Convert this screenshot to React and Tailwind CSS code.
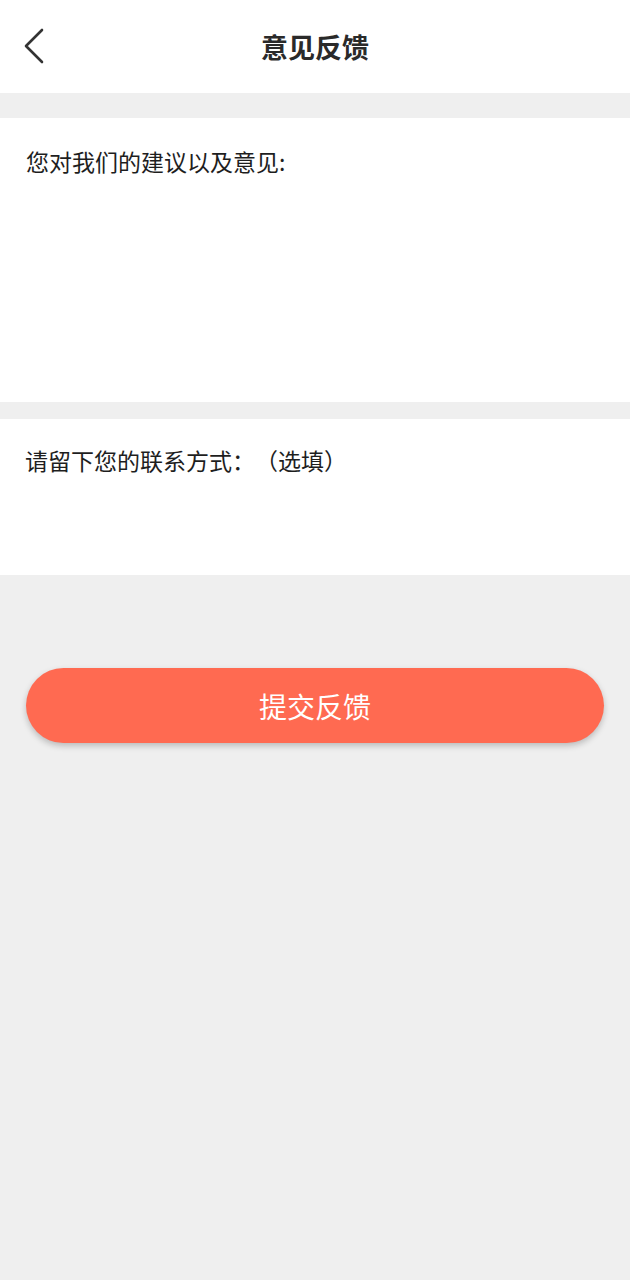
import React from "react";

const font = { fontFamily: '"Noto Sans CJK SC", "Noto Sans", sans-serif' };

export default function App() {
  return (
    <div style={font} className="min-h-[1280px] w-[630px] bg-[#efefef] text-[#1e1e1e] [text-spacing-trim:space-all]">
      <header className="relative flex h-[93px] items-center justify-center bg-white">
        <button className="absolute left-[18px] top-[26px] flex h-[40px] w-[32px] items-center justify-center">
          <svg width="22" height="36" viewBox="0 0 22 36" fill="none">
            <path d="M19 2 L3 18 L19 34" stroke="#333" strokeWidth="2.6" strokeLinecap="round" strokeLinejoin="round" />
          </svg>
        </button>
        <h1 className="text-[27px] font-bold leading-none text-[#2a2a2a]">意见反馈</h1>
      </header>

      <div className="h-[25px]" />

      <section className="h-[284px] bg-white px-[26px] pt-[28px]">
        <div className="text-[23px] leading-[30px]">您对我们的建议以及意见:</div>
      </section>

      <div className="h-[17px]" />

      <section className="h-[156px] bg-white px-[25px] pt-[26px]">
        <div className="text-[23px] leading-[30px]">请留下您的联系方式：（选填）</div>
      </section>

      <div className="px-[26px] pt-[93px]">
        <button className="flex h-[75px] w-full items-center justify-center rounded-full bg-[#ff6a51] text-[28px] text-white shadow-[0_3px_6px_rgba(0,0,0,0.22)]">
          提交反馈
        </button>
      </div>
    </div>
  );
}
